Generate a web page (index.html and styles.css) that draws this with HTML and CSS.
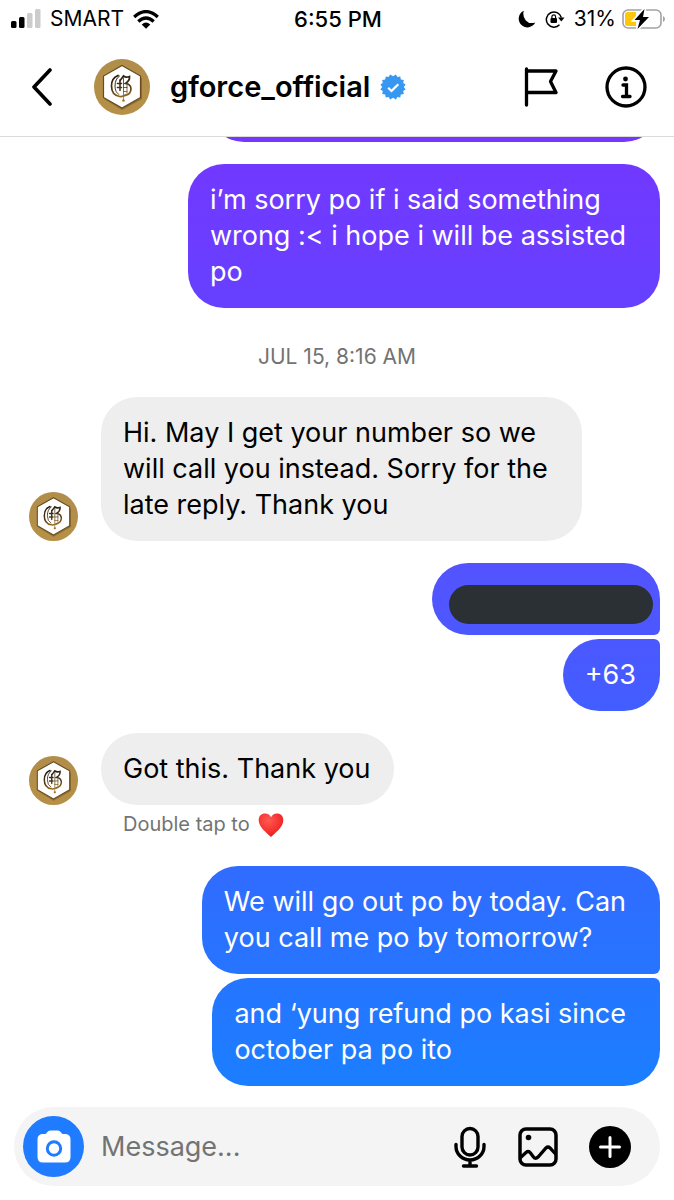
FILE: index.html
```html
<!DOCTYPE html>
<html lang="en">
<head>
<meta charset="utf-8">
<meta name="viewport" content="width=device-width, initial-scale=1">
<title>gforce_official</title>
<link rel="stylesheet" href="styles.css">
</head>
<body>
<svg class="defs" aria-hidden="true">
  <defs>
    <linearGradient id="ink" gradientUnits="userSpaceOnUse" x1="26" y1="15" x2="32" y2="42"><stop offset="0" stop-color="#1d160c"/><stop offset="0.5" stop-color="#4e3714"/><stop offset="1" stop-color="#b98325"/></linearGradient>
    <linearGradient id="gold" x1="0" y1="0" x2="0" y2="1"><stop offset="0" stop-color="#b18d4b"/><stop offset="1" stop-color="#b69045"/></linearGradient>
    <radialGradient id="red" cx="0.4" cy="0.3" r="0.8"><stop offset="0" stop-color="#ff5a50"/><stop offset="0.6" stop-color="#f5302e"/><stop offset="1" stop-color="#cf1c20"/></radialGradient>
    <symbol id="emblem" viewBox="0 0 56 56">
      <circle cx="28" cy="28" r="28" fill="url(#gold)"/>
      <path d="M28 8L48 19V40L28 51L10 40V18Z" fill="#765723" opacity=".6"/>
      <path d="M28 6.500L46.500 17V38.500L28 49L9.500 38.500V17Z" fill="#fff" stroke="#684b20" stroke-width="1.200"/>
      <g fill="none" stroke="url(#ink)" stroke-linecap="round">
        <path d="M24 16.500Q17.500 19 17.500 27Q17.500 36 25.500 37.500Q29 38 31.500 36" stroke-width="1.700"/>
        <path d="M25.500 17Q21 20 21 27Q21 33.500 25 35.500" stroke-width="1"/>
        <path d="M26.500 21L29.500 17Q32 19 35.500 17.500Q36 21.500 31.500 24.500Q36.500 25 37 29.500Q37 35 31.500 36.500" stroke-width="1.700"/>
        <path d="M26 21V31.500M23.500 24.500H27.500M23.500 28.500H27.500" stroke-width="1.600"/>
        <path d="M29.500 19V41M33 26V35M29.500 28.500H33M29.500 32.500H33" stroke-width=".8"/>
      </g>
      <circle cx="29.500" cy="41.500" r="1.300" fill="#a47727"/>
    </symbol>
  </defs>
</svg>

<div class="status">
  <div class="status-side">
    <svg class="signal" viewBox="0 0 30 20" aria-hidden="true"><rect y="12" width="5.500" height="7" rx="1.500"/><rect x="8" y="8" width="5.500" height="11" rx="1.500"/><rect x="16" y="4" width="5.500" height="15" rx="1.500" fill="#ccc"/><rect x="24" width="5.500" height="19" rx="1.500" fill="#ccc"/></svg>
    <span>SMART</span>
    <svg class="wifi" viewBox="0 0 26 19" aria-hidden="true"><g fill="none" stroke="#000" stroke-width="3.300"><path d="M1.200 7Q13-3.800 24.800 7"/><path d="M5.300 11.400Q13 4.500 20.700 11.400"/></g><path d="M8.700 14.400Q13 10.700 17.300 14.400L13 18.700Z"/></svg>
  </div>
  <time class="clock">6:55 PM</time>
  <div class="status-side status-right">
    <svg class="moon" viewBox="0 0 18 18" aria-hidden="true"><path d="M5.800.8A8.700 8.700 0 1 0 17.300 12.400Q11.500 14.400 7.800 10.400Q4.200 6 5.800.8Z"/></svg>
    <svg class="rotate" viewBox="0 0 20 18" aria-hidden="true"><path d="M14.500 14.800A7.600 7.600 0 1 1 16.300 7.500" fill="none" stroke="#000" stroke-width="1.500"/><path d="M13 7.500H19.500L16.300 11.500Z"/><rect x="5.500" y="8" width="6.500" height="5" rx="1"/><path d="M6.900 8V6.700a1.850 1.850 0 0 1 3.700 0V8" fill="none" stroke="#000" stroke-width="1.200"/></svg>
    <span class="charge">31%<svg class="battery" viewBox="0 0 43 22" aria-hidden="true"><rect x="1" y="2" width="38" height="18" rx="5" fill="none" stroke="#a2a2a7" stroke-width="1.600"/><path d="M41 8Q43 9 43 11T41 14Z" fill="#a2a2a7"/><path d="M5.500 4H14V18H5.500Q3 18 3 15.500V6.500Q3 4 5.500 4Z" fill="#ffc60a"/><path d="M22.500 1L12.500 12H18L15.500 21L27 9H21Z" stroke="#fff" stroke-width="3.500"/><path d="M22.500 1L12.500 12H18L15.500 21L27 9H21Z"/></svg></span>
  </div>
</div>

<header class="header">
  <button class="icon-btn back" aria-label="Back"><svg viewBox="0 0 20 38"><path d="M18 2L2 19L18 36" fill="none" stroke="#000" stroke-width="3.600" stroke-linecap="round" stroke-linejoin="round"/></svg></button>
  <svg class="profile" role="img" aria-label="Profile"><use href="#emblem"/></svg>
  <h1 class="name">gforce_official</h1>
  <svg class="verified" viewBox="-13 -13 26 26" role="img" aria-label="Verified"><path fill="#3897f0" d="M0-10.800L2.900-12.500L4.400-9.900L7.300-10.500L7.800-7.500L10.800-7L10.200-4.100L12.600-2.500L10.800 0L12.600 2.500L10.200 4.100L10.800 7L7.800 7.500L7.300 10.500L4.400 9.900L2.900 12.500L0 10.800L-2.900 12.500L-4.400 9.900L-7.300 10.500L-7.800 7.500L-10.800 7L-10.200 4.100L-12.600 2.500L-10.800 0L-12.600-2.500L-10.200-4.100L-10.800-7L-7.800-7.500L-7.300-10.500L-4.400-9.900L-2.900-12.500Z"/><path d="M-4.800 .8L-1.500 4L5.300-2.800" fill="none" stroke="#fff" stroke-width="2.200"/></svg>
  <div class="header-actions">
    <button class="icon-btn flag" aria-label="Flag"><svg viewBox="0 0 34 40"><path d="M2.500 2V38M2.500 4H32L26.500 14.500L32 25.500H2.500" fill="none" stroke="#000" stroke-width="3.300" stroke-linecap="round" stroke-linejoin="round"/></svg></button>
    <button class="icon-btn info" aria-label="Details"><svg viewBox="0 0 42 42"><circle cx="21" cy="21" r="19" fill="none" stroke="#000" stroke-width="3.300"/><circle cx="20.500" cy="13" r="2.400"/><path d="M18 19H21.500V30M17.500 30.500H25" fill="none" stroke="#000" stroke-width="3.300" stroke-linecap="round"/></svg></button>
  </div>
</header>

<main class="thread">
  <div class="bubble sent clipped"></div>
  <p class="bubble sent multi">i’m sorry po if i said something<br>wrong :&lt; i hope i will be assisted<br>po</p>
  <time class="date">JUL 15, 8:16 AM</time>
  <div class="received-row">
    <svg class="avatar" aria-hidden="true"><use href="#emblem"/></svg>
    <p class="bubble received multi">Hi. May I get your number so we<br>will call you instead. Sorry for the<br>late reply. Thank you</p>
  </div>
  <div class="group">
    <div class="bubble sent joins-next redacted"><div class="redaction"></div></div>
    <p class="bubble sent joins-previous">+63</p>
  </div>
  <div class="received-group">
    <div class="received-row">
      <svg class="avatar" aria-hidden="true"><use href="#emblem"/></svg>
      <p class="bubble received">Got this. Thank you</p>
    </div>
    <p class="hint">Double tap to <svg class="heart" viewBox="0 0 26 24" role="img" aria-label="love"><path fill="url(#red)" d="M13 24C9 20 1 14.500 .7 7.500C.5 3 3.500 .5 7 .5C10 .5 12 2 13 4.200C14 2 16 .5 19 .5C22.500 .5 25.500 3 25.300 7.500C25 14.500 17 20 13 24Z"/></svg></p>
  </div>
  <div class="group">
    <p class="bubble sent multi joins-next">We will go out po by today. Can<br>you call me po by tomorrow?</p>
    <p class="bubble sent multi joins-previous">and ‘yung refund po kasi since<br>october pa po ito</p>
  </div>
</main>

<form class="composer">
  <button type="button" class="camera" aria-label="Camera"><svg viewBox="0 0 34 34"><path fill="#fff" d="M6 4H8Q9 4 9.500 3Q11 .5 13 .5H21Q23 .5 24.500 3Q25 4 26 4H28Q33.500 4 33.500 9.500V27Q33.500 32.500 28 32.500H6Q.5 32.500 .5 27V9.500Q.5 4 6 4Z"/><circle cx="17" cy="18.500" r="6.700" fill="none" stroke="#1f7bff" stroke-width="3"/></svg></button>
  <input class="message" type="text" placeholder="Message..." aria-label="Message">
  <button type="button" class="icon-btn mic" aria-label="Voice message"><svg viewBox="0 0 32 42"><g fill="none" stroke="#000" stroke-width="3.400" stroke-linecap="round"><rect x="8" y="2.500" width="16" height="26.500" rx="8"/><path d="M2 18.500V20.500A14 13.500 0 0 0 30 20.500V18.500M16 34V40M9.500 40H22.500"/></g></svg></button>
  <button type="button" class="icon-btn photo" aria-label="Photo"><svg viewBox="0 0 40 40"><rect x="2" y="2" width="36" height="36" rx="6" fill="none" stroke="#000" stroke-width="3.500"/><circle cx="10.500" cy="10.500" r="2.800"/><path d="M2 31L8 25.500Q10.500 23.500 12.500 26L15.500 30Q17.500 32.500 20 30L28 21Q30 19 32 21L38 27.500" fill="none" stroke="#000" stroke-width="3.300"/></svg></button>
  <button type="button" class="icon-btn add" aria-label="More"><svg viewBox="0 0 42 42"><circle cx="21" cy="21" r="21"/><path d="M21 11.500V30.500M11.500 21H30.500" stroke="#fff" stroke-width="3" stroke-linecap="round"/></svg></button>
</form>
</body>
</html>
```

FILE: styles.css
```css
* { box-sizing: border-box; }

body {
  margin: 0;
  height: 100vh;
  display: flex;
  flex-direction: column;
  background: #fff;
  color: #000;
  font-family: Inter, "Liberation Sans", sans-serif;
  font-size: 27px;
  line-height: 36px;
}

p, h1 { margin: 0; }
svg { display: block; flex: none; }
button { border: 0; padding: 0; cursor: pointer; }
.defs { position: absolute; width: 0; height: 0; }

.icon-btn { flex: none; background: none; }

.status {
  flex: none;
  height: 38px;
  padding: 0 9px 0 11px;
  display: grid;
  grid-template-columns: 1fr auto 1fr;
  align-items: center;
  font-size: 21px;
  line-height: 36px;
}
.status-side { display: flex; align-items: center; gap: 9px; }
.status-right { justify-content: flex-end; }
.charge { display: flex; align-items: center; gap: 6px; }
.clock { font-size: 22px; font-weight: 500; }
.signal { width: 30px; height: 20px; }
.wifi { width: 26px; height: 19px; }
.moon { width: 18px; height: 18px; }
.rotate { width: 20px; height: 18px; }
.battery { width: 43px; height: 22px; }

.header {
  flex: none;
  height: 99px;
  padding: 0 27px 0 32px;
  display: flex;
  align-items: center;
  border-bottom: 1px solid #dbdbdb;
}
.back svg { width: 20px; height: 38px; }
.profile { width: 56px; height: 56px; margin: 0 20px 0 42px; }
.name { font-size: 29px; font-weight: 600; line-height: 36px; }
.verified { width: 26px; height: 26px; margin-left: 10px; }
.header-actions { margin-left: auto; display: flex; align-items: center; gap: 47px; }
.flag svg { width: 34px; height: 40px; }
.info svg { width: 42px; height: 42px; }

.thread {
  flex: 1;
  min-height: 0;
  padding: 0 14px;
  display: flex;
  flex-direction: column;
  justify-content: flex-end;
  gap: 22px;
  overflow: hidden;
}
.thread > * { flex: none; }

.bubble {
  width: fit-content;
  min-height: 72px;
  padding: 18px 24px 18px 22px;
  border-radius: 36px;
}
.multi { padding-right: 34px; }
.sent {
  align-self: flex-end;
  color: #fff;
  background: linear-gradient(#7437ff 136px, #6640ff 308px, #5056ff 600px, #465bff 676px, #306cff 870px, #1b7eff 1085px) fixed;
}
.received { background: #eee; }
.clipped { width: 70%; }

.group { display: flex; flex-direction: column; gap: 4px; }
.joins-next { border-bottom-right-radius: 6px; }
.joins-previous { border-top-right-radius: 6px; }

.redacted { padding: 22px 7px 11px 17px; }
.redaction { width: 204px; height: 39px; border-radius: 20px; background: #2b3034; }

.date {
  align-self: center;
  padding-top: 9px;
  font-size: 21px;
  line-height: 36px;
  color: #737373;
}

.received-row { display: flex; align-items: flex-end; gap: 23px; padding-left: 15px; }
.avatar { width: 49px; height: 49px; }
.hint {
  display: flex;
  align-items: center;
  gap: 8px;
  padding-left: 109px;
  font-size: 20px;
  line-height: 39px;
  color: #737373;
}
.heart { width: 26px; height: 24px; }

.composer {
  flex: none;
  height: 79px;
  margin: 21px 14px 14px;
  padding: 0 29px 0 9px;
  display: flex;
  align-items: center;
  border-radius: 40px;
  background: #f4f4f4;
}
.camera {
  flex: none;
  width: 61px;
  height: 61px;
  display: grid;
  place-items: center;
  border-radius: 50%;
  background: #1f7bff;
}
.camera svg { width: 34px; height: 34px; }
.message {
  flex: 1;
  min-width: 0;
  margin-left: 17px;
  padding: 0;
  border: 0;
  outline: 0;
  background: none;
  font: inherit;
}
.message::placeholder { color: #737373; opacity: 1; }
.mic svg { width: 32px; height: 42px; }
.photo { margin: 0 31px 0 32px; }
.photo svg { width: 40px; height: 40px; }
.add svg { width: 42px; height: 42px; }
```
